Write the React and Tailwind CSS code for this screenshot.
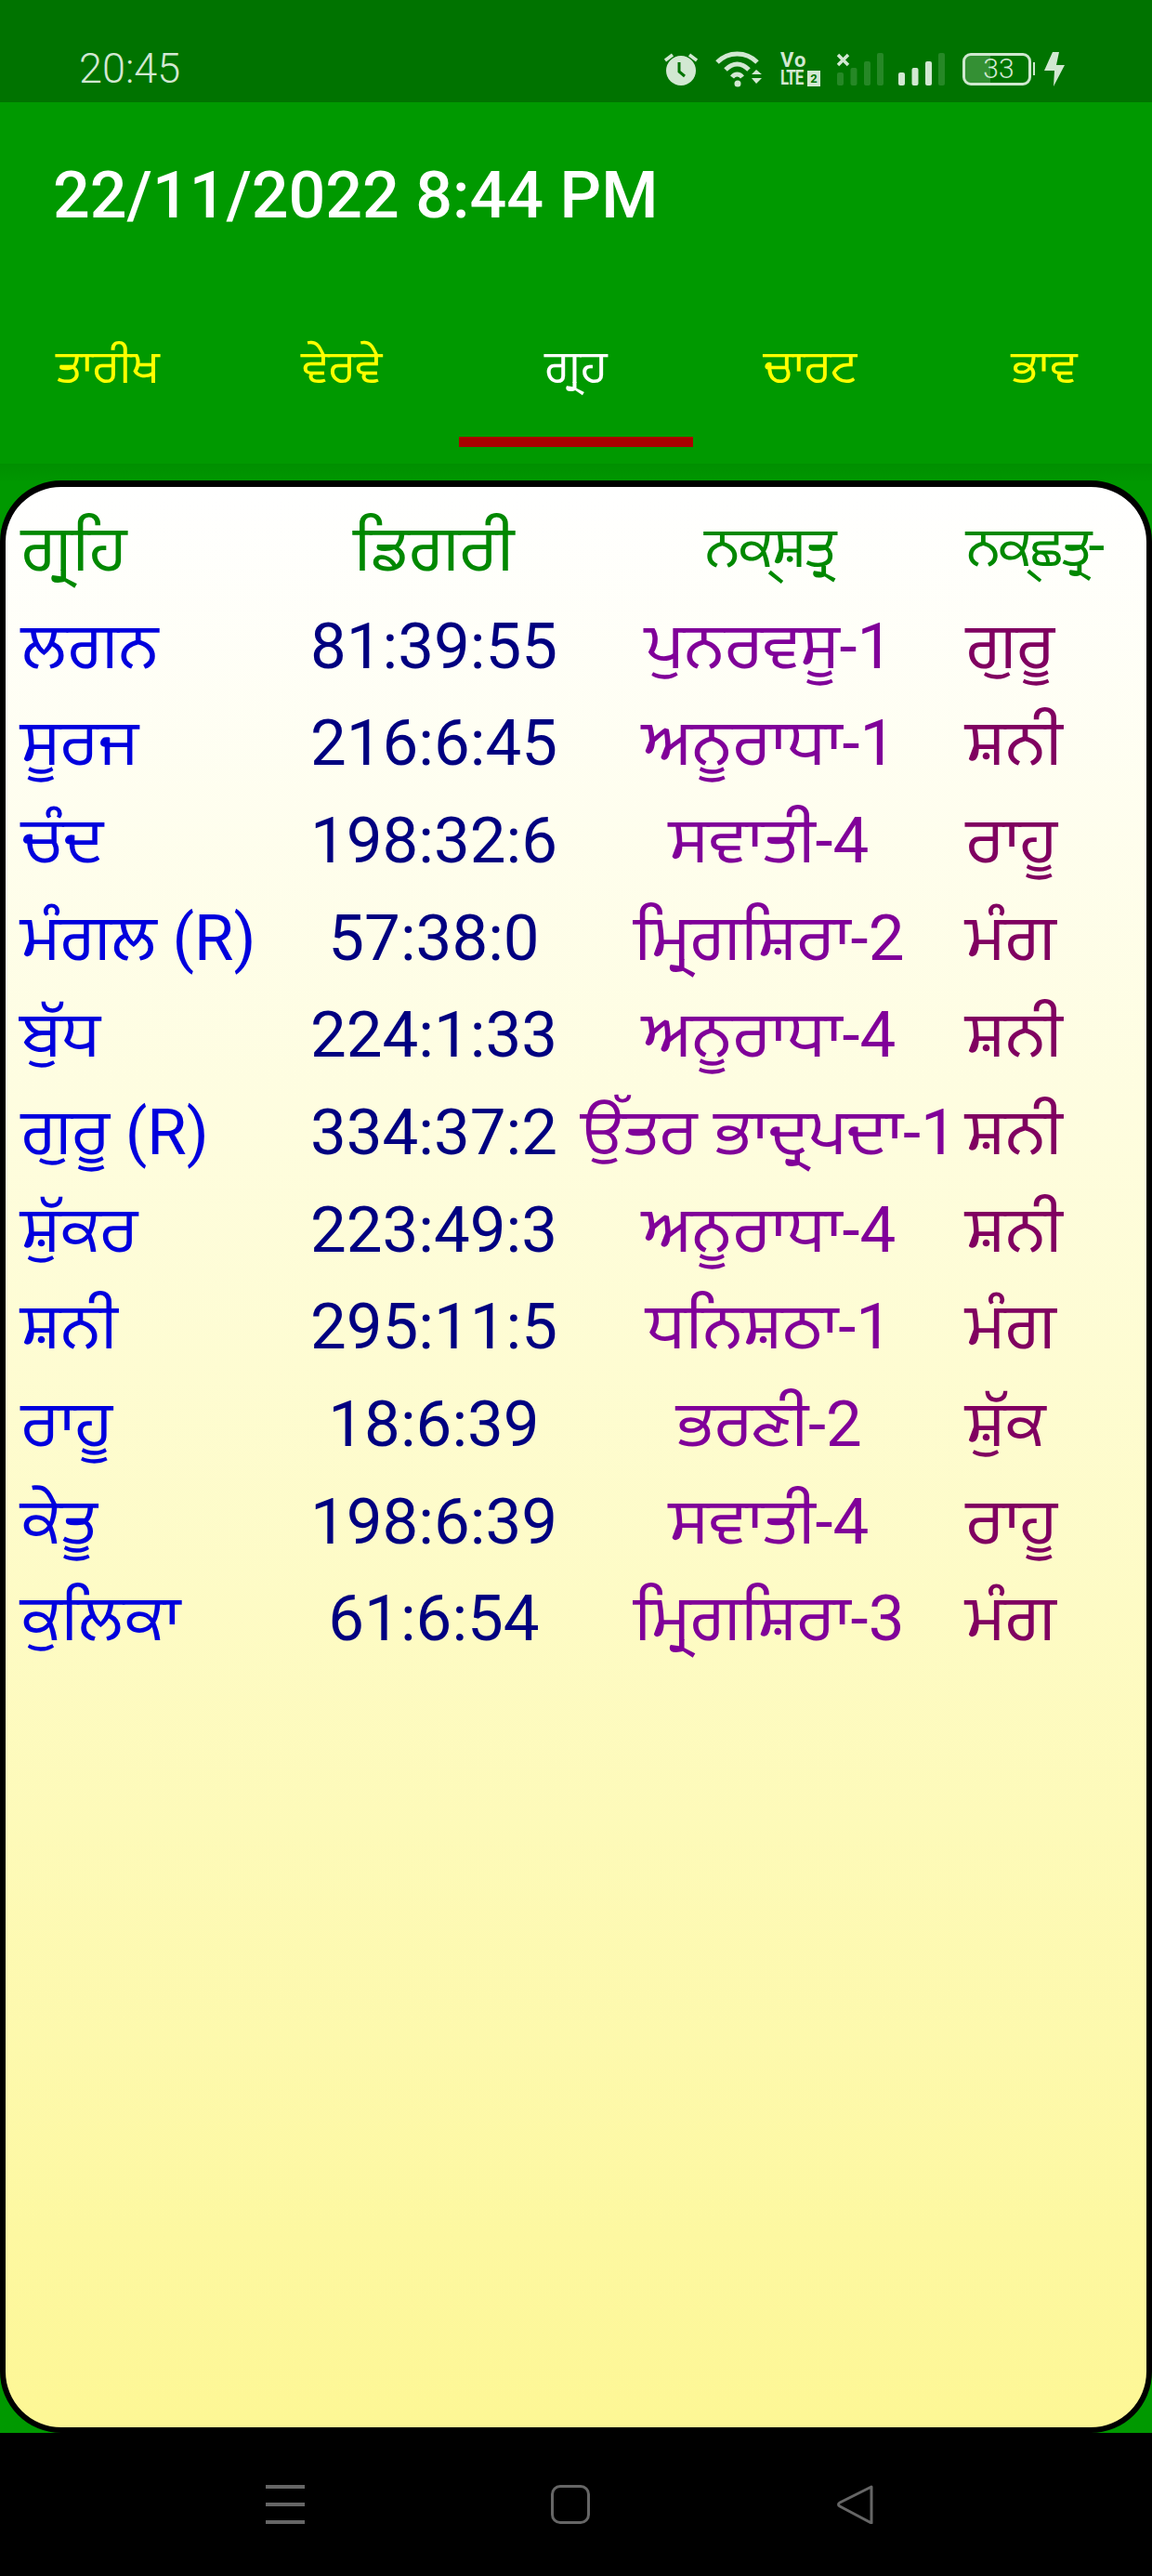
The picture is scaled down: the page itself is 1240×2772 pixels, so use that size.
import React from "react";

const rows = [
  ["ਲਗਨ", "81:39:55", "ਪੁਨਰਵਸੂ-1", "ਗੁਰੂ"],
  ["ਸੂਰਜ", "216:6:45", "ਅਨੂਰਾਧਾ-1", "ਸ਼ਨੀ"],
  ["ਚੰਦ", "198:32:6", "ਸਵਾਤੀ-4", "ਰਾਹੂ"],
  ["ਮੰਗਲ (R)", "57:38:0", "ਮ੍ਰਿਗਸ਼ਿਰਾ-2", "ਮੰਗ"],
  ["ਬੁੱਧ", "224:1:33", "ਅਨੂਰਾਧਾ-4", "ਸ਼ਨੀ"],
  ["ਗੁਰੂ (R)", "334:37:2", "ਉੱਤਰ ਭਾਦ੍ਰਪਦਾ-1", "ਸ਼ਨੀ"],
  ["ਸ਼ੁੱਕਰ", "223:49:3", "ਅਨੂਰਾਧਾ-4", "ਸ਼ਨੀ"],
  ["ਸ਼ਨੀ", "295:11:5", "ਧਨਿਸ਼ਠਾ-1", "ਮੰਗ"],
  ["ਰਾਹੂ", "18:6:39", "ਭਰਣੀ-2", "ਸ਼ੁੱਕ"],
  ["ਕੇਤੂ", "198:6:39", "ਸਵਾਤੀ-4", "ਰਾਹੂ"],
  ["ਕੁਲਿਕਾ", "61:6:54", "ਮ੍ਰਿਗਸ਼ਿਰਾ-3", "ਮੰਗ"],
];

const tabs = ["ਤਾਰੀਖ", "ਵੇਰਵੇ", "ਗ੍ਰਹ", "ਚਾਰਟ", "ਭਾਵ"];

const gridCols = "grid grid-cols-[312px_298px_424px_1fr] items-center h-[104.7px] text-[75px]";

function Alarm() {
  return (
    <svg width="36" height="36" viewBox="0 0 36 36">
      <circle cx="18" cy="20" r="16" fill="#d2e8d2" />
      <path d="M16 11v10l6 5" fill="none" stroke="#007300" strokeWidth="3" />
      <path d="M1 9l8-6M35 9l-8-6" fill="none" stroke="#d2e8d2" strokeWidth="3.5" />
    </svg>
  );
}

function Wifi() {
  return (
    <svg width="50" height="40" viewBox="0 0 50 40" className="ml-[19px]">
      <path d="M2 13C14 1 33 1 45 13" fill="none" stroke="#d2e8d2" strokeWidth="5" />
      <path d="M11 21C19 13 28 13 36 21" fill="none" stroke="#d2e8d2" strokeWidth="5" />
      <path d="M18 29C21 25 26 25 29 29" fill="none" stroke="#d2e8d2" strokeWidth="5" />
      <circle cx="24" cy="36" r="3.5" fill="#d2e8d2" />
      <path d="M39 26l5-5 6 5zM39 30l5 6 6-6z" fill="#d2e8d2" />
    </svg>
  );
}

function VoLte() {
  return (
    <div className="ml-5 w-[43px] h-10 flex flex-col font-bold text-[#d2e8d2] leading-none">
      <span className="text-[22px] h-[21px] tracking-[1px]">Vo</span>
      <div className="flex items-center gap-[2px] h-[19px]">
        <span className="text-[17px] tracking-[-1px] scale-y-125 w-[27px]">LTE</span>
        <span className="w-[14px] h-[17px] bg-[#d2e8d2] text-[#007300] text-[13px] flex items-center justify-center">2</span>
      </div>
    </div>
  );
}

function Signal({ dim, cross }) {
  const op = (i) => (dim || i === 3 ? 0.18 : 1);
  return (
    <svg width="50" height="36" viewBox="0 0 50 36" className={cross ? "ml-[18px]" : "ml-4"}>
      <rect x="0" y="22" width="7" height="14" rx="2" fill="#d2e8d2" opacity={op(0)} />
      <rect x="14.5" y="17" width="7" height="19" rx="2" fill="#d2e8d2" opacity={op(1)} />
      <rect x="29" y="10" width="7" height="26" rx="2" fill="#d2e8d2" opacity={op(2)} />
      <rect x="43" y="1" width="7" height="35" rx="2" fill="#d2e8d2" opacity={op(3)} />
      {cross && <path d="M1 3l11 11M12 3L1 14" stroke="#d2e8d2" strokeWidth="3.5" />}
    </svg>
  );
}

function Battery() {
  return (
    <div className="ml-[19px] flex items-center">
      <div className="relative w-[74px] h-[35px] rounded-[9px] border-[3px] border-[#cfe8cf] overflow-hidden flex items-center justify-center">
        <div className="absolute left-0 top-0 bottom-0 w-[27px] bg-[#cfe8cf]/25" />
        <span className="relative font-light text-[#d2e8d2] text-[30px] leading-none pl-[4px]">33</span>
      </div>
      <div className="ml-[2px] w-[2px] h-[14px] bg-[#cfe8cf]" />
    </div>
  );
}

function Bolt() {
  return (
    <svg width="24" height="37" viewBox="0 0 24 37" className="ml-[9px]">
      <path d="M10 0h7l-3 14h9L11 37l1-17H1z" fill="#d2e8d2" />
    </svg>
  );
}

function StatusBar() {
  return (
    <div className="h-[110px] shrink-0 bg-[#007300] flex items-start">
      <span className="ml-[85px] mt-[50px] font-light text-[45px] leading-[48px] text-[#d2e8d2]">20:45</span>
      <div className="ml-auto mr-[93px] mt-[54px] flex items-center">
        <Alarm />
        <Wifi />
        <VoLte />
        <Signal dim cross />
        <Signal />
        <Battery />
        <Bolt />
      </div>
    </div>
  );
}

function Tabs() {
  return (
    <div className="flex -ml-2.5 w-[1260px]">
      {tabs.map((t, i) => (
        <div key={t} className="w-[252px] shrink-0 flex flex-col items-center">
          <div className={`h-[150px] flex items-center text-[53px] ${i === 2 ? "text-white" : "text-[#ffff00]"}`}>{t}</div>
          <div className={`w-full h-[11px] ${i === 2 ? "bg-[#aa0000]" : ""}`} />
        </div>
      ))}
    </div>
  );
}

// gurmukhi runs a bit larger than the numbers next to them
function Nakshatra({ value }) {
  const [name, pada] = value.split("-");
  return (
    <>
      {name}
      <span className="text-[69px]">-{pada}</span>
    </>
  );
}

function Planet({ value }) {
  const [name, retro] = value.split(" ");
  return (
    <>
      {name}
      {retro && <span className="text-[69px]"> {retro}</span>}
    </>
  );
}

function PlanetTable() {
  return (
    <div className="flex-1 rounded-[66px] border-x-[6px] border-t-[7px] border-b-[6px] border-black bg-linear-to-b from-white to-[#fdf795] pt-[15px] leading-none">
      <div className={`${gridCols} text-[#008800]`}>
        <span className="pl-[17px] pb-[6px]">ਗ੍ਰਹਿ</span>
        <span className="text-center pb-[6px]">ਡਿਗਰੀ</span>
        <span className="text-center pb-[6px] text-[66px] tracking-[-2px]">ਨਕ੍ਸ਼ਤ੍ਰ</span>
        <span className="pb-[6px] whitespace-nowrap text-[64px] tracking-[-3px]">ਨਕ੍ਛਤ੍ਰ-</span>
      </div>
      {rows.map((r, i) => (
        <div key={i} className={gridCols}>
          <span className="pl-[17px] pb-[6px] text-[#0000dd] whitespace-nowrap"><Planet value={r[0]} /></span>
          <span className="text-center pb-[2px] text-[69px] text-[#000080]">{r[1]}</span>
          <span className="text-center pb-[6px] text-[#800099] whitespace-nowrap"><Nakshatra value={r[2]} /></span>
          <span className="pb-[6px] text-[#800060]">{r[3]}</span>
        </div>
      ))}
    </div>
  );
}

function NavBar() {
  return (
    <div className="h-[154px] shrink-0 bg-black flex items-center justify-center pr-3">
      <div className="w-[307px] flex justify-center">
        <div className="w-[42px] h-[42px] flex flex-col justify-between">
          <div className="h-1 bg-[#666666]" />
          <div className="h-1 bg-[#666666]" />
          <div className="h-1 bg-[#666666]" />
        </div>
      </div>
      <div className="w-[307px] flex justify-center">
        <div className="w-[42px] h-[42px] rounded-[10px] border-[3px] border-[#666666]" />
      </div>
      <div className="w-[307px] flex justify-center">
        <svg width="42" height="42" viewBox="0 0 42 42">
          <path d="M38 2L4 19c-2 1-2 3 0 4l34 18z" fill="none" stroke="#666666" strokeWidth="3" strokeLinejoin="round" />
        </svg>
      </div>
    </div>
  );
}

export default function App() {
  return (
    <div className="w-[1240px] h-[2772px] overflow-hidden flex flex-col bg-[#009900] font-['Roboto','Mukta_Mahee',sans-serif]">
      <StatusBar />
      <div className="shrink-0 flex flex-col">
        <div className="h-[210px] pb-2.5 pl-[57px] flex items-center font-medium text-white text-[70px] leading-none">
          22/11/2022 8:44 PM
        </div>
        <Tabs />
        <div className="h-[18px] mt-[18px] bg-linear-to-b from-[#008f00] to-[#009600]" />
      </div>
      <PlanetTable />
      <NavBar />
    </div>
  );
}
